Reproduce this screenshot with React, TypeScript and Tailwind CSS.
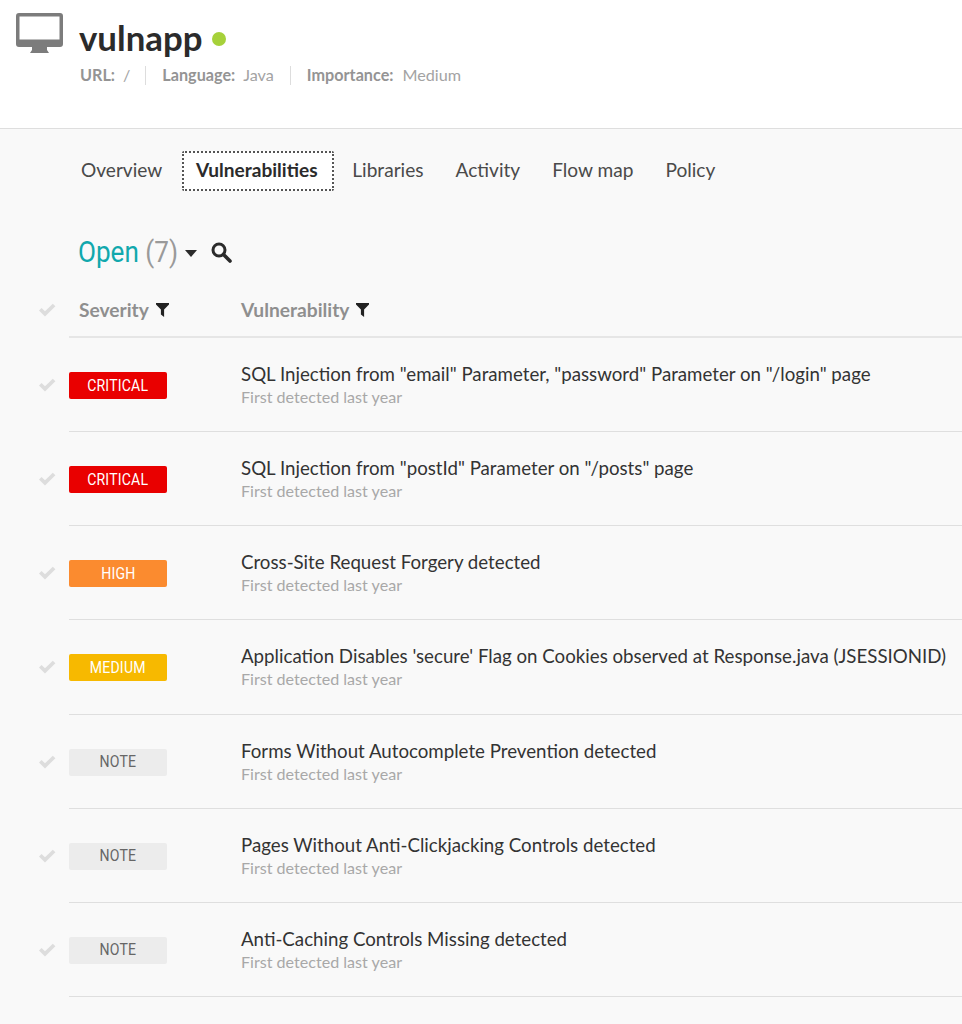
import React from 'react';

const rows = [
    { level: 'CRITICAL', badge: 'bg-[#e90000] text-white', title: 'SQL Injection from "email" Parameter, "password" Parameter on "/login" page' },
    { level: 'CRITICAL', badge: 'bg-[#e90000] text-white', title: 'SQL Injection from "postId" Parameter on "/posts" page' },
    { level: 'HIGH', badge: 'bg-[#fb8b2f] text-white', title: 'Cross-Site Request Forgery detected' },
    { level: 'MEDIUM', badge: 'bg-[#f7b900] text-white', title: "Application Disables 'secure' Flag on Cookies observed at Response.java (JSESSIONID)" },
    { level: 'NOTE', badge: 'bg-[#ececec] text-[#666666]', title: 'Forms Without Autocomplete Prevention detected' },
    { level: 'NOTE', badge: 'bg-[#ececec] text-[#666666]', title: 'Pages Without Anti-Clickjacking Controls detected' },
    { level: 'NOTE', badge: 'bg-[#ececec] text-[#666666]', title: 'Anti-Caching Controls Missing detected' },
];

const tabs = ['Overview', 'Vulnerabilities', 'Libraries', 'Activity', 'Flow map', 'Policy'];

const Check = () => (
    <svg width="18" height="14" viewBox="0 0 18 14" className="text-[#dddddd]">
        <path d="M1 7.5 L3.5 5 L7 8.3 L14.8 0.8 L17.4 3.3 L7 13.4 Z" fill="currentColor" />
    </svg>
);

const Funnel = () => (
    <svg width="13" height="14" viewBox="0 0 13 14" className="text-[#222222]">
        <path d="M0 0 H13 V1.4 L8.1 6.6 V14 L4.9 11.6 V6.6 L0 1.4 Z" fill="currentColor" />
    </svg>
);

const Monitor = () => (
    <svg width="47" height="41" viewBox="0 0 47 41" className="text-[#7c7c7c]">
        <path
            fillRule="evenodd"
            d="M3 0 H44 A3 3 0 0 1 47 3 V31 A3 3 0 0 1 44 34 H31 V37 L33 40 H14 L16 37 V34 H3 A3 3 0 0 1 0 31 V3 A3 3 0 0 1 3 0 Z M3.5 3.5 V26.5 H43.5 V3.5 Z"
            fill="currentColor"
        />
    </svg>
);

const App = () => {
    return (
        <div className="w-[962px] h-[1024px] overflow-hidden bg-[#f9f9f9] font-['Lato',sans-serif]">
            {/* Header */}
            <div className="h-[129px] bg-white border-b border-[#dedede] flex pl-4 pt-[13px]">
                <Monitor />
                <div className="ml-4">
                    <div className="flex items-center h-[50px]">
                        <span className="text-[34.8px] leading-none font-bold text-[#2b2b2b]">vulnapp</span>
                        <span className="ml-[10px] mt-[1px] w-[14px] h-[14px] rounded-full bg-[#a6d13a]" />
                    </div>
                    <div className="flex items-center mt-[2px] pl-px text-[16.2px] leading-5 text-[#a3a3a3]">
                        <span className="font-bold text-[#949494]">URL:</span>
                        <span className="ml-2">/</span>
                        <span className="ml-[15px] mr-[16px] w-px h-[19px] bg-[#dddddd]" />
                        <span className="font-bold text-[#949494]">Language:</span>
                        <span className="ml-2">Java</span>
                        <span className="mx-[16px] w-px h-[19px] bg-[#dddddd]" />
                        <span className="font-bold text-[#949494]">Importance:</span>
                        <span className="ml-[9px]">Medium</span>
                    </div>
                </div>
            </div>

            {/* Tabs */}
            <div className="flex items-center pl-[65px] mt-[22px] h-[40px] text-[19.1px] text-[#4a4a4a]">
                {tabs.map((tab) =>
                    tab === 'Vulnerabilities' ? (
                        <span
                            key={tab}
                            className="h-[40px] w-[152px] ml-[4px] mr-[2px] flex items-center justify-center bg-white border-2 border-dotted border-[#555555] rounded-[2px] font-bold text-[#2b2b2b] pb-[2px] pr-[3px]"
                        >
                            {tab}
                        </span>
                    ) : (
                        <span key={tab} className="px-[16px] pb-[2px]">
                            {tab}
                        </span>
                    )
                )}
            </div>

            {/* Open count */}
            <div className="flex items-center pl-[78px] mt-[41px] h-[40px]">
                <span className="w-[100px] shrink-0 origin-left scale-x-[0.87] whitespace-nowrap text-[30px] leading-none font-['Roboto',sans-serif]">
                    <span className="text-[#11a8ad]">Open</span> <span className="text-[#9a9a9a]">(7)</span>
                </span>
                <svg width="12" height="7" viewBox="0 0 12 7" className="ml-[7px] mt-[2px] text-[#2b2b2b]">
                    <path d="M0 0 H12 L6 7 Z" fill="currentColor" />
                </svg>
                <svg width="21" height="21" viewBox="0 0 21 21" fill="none" className="ml-[14px] text-[#2b2b2b]">
                    <circle cx="8" cy="8" r="6" stroke="currentColor" strokeWidth="3" />
                    <path d="M12.5 12.5 L19 19" stroke="currentColor" strokeWidth="3.6" strokeLinecap="round" />
                </svg>
            </div>

            {/* Table head */}
            <div className="flex mt-[19px]">
                <div className="w-[69px] shrink-0 pl-[38px] pt-[12px]">
                    <Check />
                </div>
                <div className="flex-1 h-[47px] pl-[10px] flex items-start border-b-2 border-[#e6e6e6] text-[19.2px] leading-[23px] font-bold text-[#8f8f8f]">
                    <div className="w-[162px] flex items-center gap-[7px] pt-[7px]">
                        Severity <Funnel />
                    </div>
                    <div className="flex items-center gap-[7px] pt-[7px]">
                        Vulnerability <Funnel />
                    </div>
                </div>
            </div>

            {/* Rows */}
            {rows.map((row, i) => (
                <div key={i} className="flex">
                    <div className="w-[69px] shrink-0 pl-[38px] pt-[40px]">
                        <Check />
                    </div>
                    <div className="flex-1 h-[94.15px] flex items-start border-b border-[#dfdfdf]">
                        <div className="w-[172px] shrink-0 pt-[34px]">
                            <span
                                className={`w-[98px] h-[27px] rounded-[2px] flex items-center justify-center text-[16px] font-['Roboto',sans-serif] ${row.badge}`}
                            >
                                <span className="scale-x-[0.88] tracking-[0.2px]">{row.level}</span>
                            </span>
                        </div>
                        <div className="pt-[24px] whitespace-nowrap">
                            <div className="text-[18.7px] leading-[24px] text-[#333333]">{row.title}</div>
                            <div className="text-[16.1px] leading-[22px] text-[#a8a8a8]">First detected last year</div>
                        </div>
                    </div>
                </div>
            ))}
        </div>
    );
};

export default App;
